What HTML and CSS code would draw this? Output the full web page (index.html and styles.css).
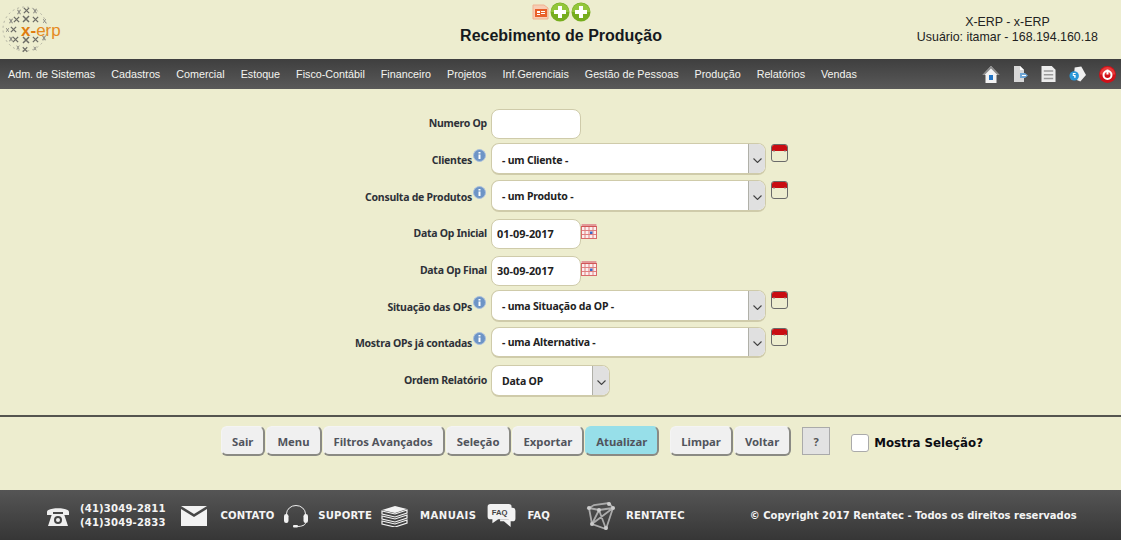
FILE: index.html
```html
<!DOCTYPE html>
<html lang="pt-BR">
<head>
<meta charset="utf-8">
<title>Recebimento de Produção</title>
<link rel="stylesheet" href="styles.css">
</head>
<body>
<svg class="defs" width="0" height="0" aria-hidden="true">
  <defs>
    <linearGradient id="calg" x1="0" y1="0" x2="0" y2="1"><stop offset="0" stop-color="#ffffff"/><stop offset="1" stop-color="#cfcfcf"/></linearGradient>
    <symbol id="x" viewBox="0 0 8 8"><path d="M1 1l6 6M7 1L1 7" stroke="#6c6c66" stroke-width="1.500" fill="none"/></symbol>
    <symbol id="xs" viewBox="0 0 8 8"><path d="M2 1l4 6M6 1L2 7" stroke="#86867f" stroke-width="1.400" fill="none"/></symbol>
    <symbol id="cal" viewBox="0 0 17 18">
      <rect x="0.500" y="0.500" width="16" height="17" rx="2.500" fill="url(#calg)" stroke="#6a6a6a"/>
      <path d="M1 3q0-2 2-2h11q2 0 2 2v4H1z" fill="#c90c12"/>
      <path d="M3 6v2M14 6v2" stroke="#888"/>
    </symbol>
    <symbol id="grid" viewBox="0 0 16 16">
      <rect x="0.500" y="3.500" width="15" height="12" fill="#fbeeee" stroke="#d86a6a"/>
      <path d="M0.500 1h15v3h-15z" fill="#d05555"/>
      <path d="M1 1v2M3 1v2M5 1v2M7 1v2M9 1v2M11 1v2M13 1v2M15 1v2" stroke="#fff" stroke-width=".8"/>
      <path d="M4 4v11M8 4v11M12 4v11M1 7.500h14M1 11.500h14" stroke="#e08080"/>
      <rect x="9" y="8.500" width="2.500" height="2.500" fill="#3a68c8"/>
    </symbol>
    <symbol id="info" viewBox="0 0 13 13">
      <circle cx="6.500" cy="6.500" r="6" fill="#6d94c6" stroke="#a9bfdc"/>
      <path d="M5.500 3h2v1.600h-2zM5.500 5.500h2v4.500h-2z" fill="#fff"/>
    </symbol>
    <symbol id="plus" viewBox="0 0 20 20">
      <circle cx="10" cy="10" r="9.500" fill="#76ad1e"/>
      <path d="M1 10a9 9 0 0 1 18 0z" fill="#93c63a"/>
      <path d="M8 4h4v4h4v4h-4v4H8v-4H4V8h4z" fill="#fff"/>
    </symbol>
    <symbol id="chev" viewBox="0 0 9 5"><path d="M.5 .5l4 4 4-4" fill="none" stroke="#444" stroke-width="1.100"/></symbol>
  </defs>
</svg>

<header class="top">
  <svg class="logo" width="62" height="54" viewBox="0 0 62 54" role="img" aria-label="x-erp">
    <circle cx="24" cy="28" r="22" fill="none" stroke="#a3a398" stroke-width=".8" stroke-dasharray="2 3"/>
    <use href="#xs" x="15" y="8" width="6" height="6"/><use href="#x" x="22" y="6" width="7" height="7"/><use href="#xs" x="31" y="7" width="6" height="6"/>
    <use href="#xs" x="7" y="17" width="6" height="6"/><use href="#x" x="12" y="15" width="7" height="7"/><use href="#x" x="21" y="14" width="8" height="8"/><use href="#x" x="31" y="15" width="7" height="7"/><use href="#xs" x="41" y="17" width="5" height="6"/>
    <use href="#xs" x="4" y="26" width="5" height="6"/><use href="#x" x="9" y="25" width="7" height="7"/>
    <use href="#xs" x="7" y="35" width="6" height="6"/><use href="#x" x="11" y="35" width="7" height="7"/><use href="#x" x="21" y="35" width="8" height="8"/><use href="#x" x="31" y="35" width="7" height="7"/><use href="#xs" x="40" y="34" width="6" height="6"/>
    <use href="#xs" x="14" y="44" width="6" height="5"/><use href="#x" x="21" y="45" width="6" height="7"/><use href="#xs" x="31" y="45" width="6" height="5"/>
    <text x="20" y="35" class="logo-text"><tspan class="logo-x">x-</tspan>erp</text>
  </svg>
  <div class="top-center">
    <div class="top-icons">
      <svg width="17" height="16" viewBox="0 0 17 16" aria-hidden="true">
        <path d="M1 1h11l4 3v11H1z" fill="#f8cdb4" stroke="#f0b391"/>
        <path d="M3 5h12v8H3z" fill="#e8602a"/>
        <path d="M5 7h3v2H5zM9 7h4v1H9zM9 9h4v1H9zM5 10h3v1H5z" fill="#fff"/>
      </svg>
      <svg width="20" height="20" aria-hidden="true"><use href="#plus"/></svg>
      <svg width="20" height="20" aria-hidden="true"><use href="#plus"/></svg>
    </div>
    <h1 class="title">Recebimento de Produção</h1>
  </div>
  <div class="user">
    <div>X-ERP - x-ERP</div>
    <div>Usuário: itamar - 168.194.160.18</div>
  </div>
</header>

<nav class="menu">
  <ul class="menu-list">
    <li>Adm. de Sistemas</li><li>Cadastros</li><li>Comercial</li><li>Estoque</li><li>Fisco-Contábil</li><li>Financeiro</li><li>Projetos</li><li>Inf.Gerenciais</li><li>Gestão de Pessoas</li><li>Produção</li><li>Relatórios</li><li>Vendas</li>
  </ul>
  <div class="menu-icons">
    <svg width="18" height="19" viewBox="0 0 18 19" aria-hidden="true">
      <path d="M9 1L0.500 10h3v8h11v-8h3z" fill="#f3f3f3"/>
      <path d="M9 1L0.500 10h2L9 3.500 15.500 10h2z" fill="#8b8b8b"/>
      <path d="M7 10h4v5H7z" fill="#2274c4"/>
    </svg>
    <svg width="15" height="18" viewBox="0 0 15 18" aria-hidden="true">
      <path d="M1 1h6l4 4v12H1z" fill="#d8d8d8"/>
      <path d="M7 1l4 4H7z" fill="#fff"/>
      <path d="M7 8h5l3 2.500-3 2.500H7z" fill="#6ea5d4"/>
      <path d="M9 10h4v1H9z" fill="#fff"/>
    </svg>
    <svg width="15" height="18" viewBox="0 0 16 18" aria-hidden="true">
      <path d="M0.500 0.500h11l4 4v13H.5z" fill="#ececec"/>
      <path d="M3 5h10v1.500H3zM3 9h10v1.500H3zM3 13h10v1.500H3z" fill="#9a9a9a"/>
    </svg>
    <svg width="17" height="18" viewBox="0 0 18 18" aria-hidden="true">
      <path d="M6 2l7-1 5 9-6 7-7-3z" fill="#f0f0f0"/>
      <circle cx="5.500" cy="11" r="5" fill="#2a96d8"/>
      <path d="M4 8h3v1H5v1h2v3H5.500v-2H4z" fill="#fff"/>
    </svg>
    <svg width="17" height="17" viewBox="0 0 17 17" aria-hidden="true">
      <circle cx="8.500" cy="8.500" r="8.500" fill="#d01018"/>
      <path d="M1 8.500a7.500 7.500 0 0 1 15 0z" fill="#e83a3a"/>
      <circle cx="8.500" cy="9" r="4" fill="none" stroke="#fff" stroke-width="2"/>
      <path d="M8.500 3.500v5" stroke="#fff" stroke-width="2"/>
    </svg>
  </div>
</nav>

<main class="content">
  <form class="form">
    <div class="row row-num">
      <label class="lbl" for="f-num">Numero Op</label>
      <input class="field" id="f-num" type="text">
    </div>
    <div class="row row-a">
      <label class="lbl lbl-i">Clientes<svg class="info" width="13" height="13" aria-hidden="true"><use href="#info"/></svg></label>
      <div class="sel sel-wide"><span class="sel-text">- um Cliente -</span><span class="arrow"><svg width="9" height="5" aria-hidden="true"><use href="#chev"/></svg></span></div>
      <svg class="cal" width="17" height="18" aria-hidden="true"><use href="#cal"/></svg>
    </div>
    <div class="row row-b">
      <label class="lbl lbl-i">Consulta de Produtos<svg class="info" width="13" height="13" aria-hidden="true"><use href="#info"/></svg></label>
      <div class="sel sel-wide"><span class="sel-text">- um Produto -</span><span class="arrow"><svg width="9" height="5" aria-hidden="true"><use href="#chev"/></svg></span></div>
      <svg class="cal" width="17" height="18" aria-hidden="true"><use href="#cal"/></svg>
    </div>
    <div class="row row-c">
      <label class="lbl" for="f-ini">Data Op Inicial</label>
      <input class="field" id="f-ini" type="text" value="01-09-2017">
      <svg class="grid-ic" width="16" height="16" aria-hidden="true"><use href="#grid"/></svg>
    </div>
    <div class="row row-d">
      <label class="lbl" for="f-fim">Data Op Final</label>
      <input class="field" id="f-fim" type="text" value="30-09-2017">
      <svg class="grid-ic" width="16" height="16" aria-hidden="true"><use href="#grid"/></svg>
    </div>
    <div class="row row-e">
      <label class="lbl lbl-i">Situação das OPs<svg class="info" width="13" height="13" aria-hidden="true"><use href="#info"/></svg></label>
      <div class="sel sel-wide"><span class="sel-text">- uma Situação da OP -</span><span class="arrow"><svg width="9" height="5" aria-hidden="true"><use href="#chev"/></svg></span></div>
      <svg class="cal" width="17" height="18" aria-hidden="true"><use href="#cal"/></svg>
    </div>
    <div class="row row-f">
      <label class="lbl lbl-i">Mostra OPs já contadas<svg class="info" width="13" height="13" aria-hidden="true"><use href="#info"/></svg></label>
      <div class="sel sel-wide"><span class="sel-text">- uma Alternativa -</span><span class="arrow"><svg width="9" height="5" aria-hidden="true"><use href="#chev"/></svg></span></div>
      <svg class="cal" width="17" height="18" aria-hidden="true"><use href="#cal"/></svg>
    </div>
    <div class="row row-g">
      <label class="lbl">Ordem Relatório</label>
      <div class="sel sel-small"><span class="sel-text">Data OP</span><span class="arrow"><svg width="9" height="5" aria-hidden="true"><use href="#chev"/></svg></span></div>
    </div>
  </form>

  <div class="actions">
    <div class="btn-group">
      <button class="btn" type="button">Sair</button>
      <button class="btn" type="button">Menu</button>
      <button class="btn" type="button">Filtros Avançados</button>
      <button class="btn" type="button">Seleção</button>
      <button class="btn" type="button">Exportar</button>
      <button class="btn btn-primary" type="button">Atualizar</button>
    </div>
    <div class="btn-group btn-group-2">
      <button class="btn" type="button">Limpar</button>
      <button class="btn" type="button">Voltar</button>
    </div>
    <button class="help" type="button">?</button>
    <label class="check"><span class="box"></span>Mostra Seleção?</label>
  </div>
</main>

<footer class="foot">
  <svg class="f-phone" width="24" height="24" viewBox="0 0 24 24" aria-hidden="true">
    <path d="M1 8c0-5 22-5 22 0v3h-6V8H7v3H1z" fill="#eee"/>
    <path d="M6 10h12l4 12H2z" fill="#eee"/>
    <circle cx="12" cy="16" r="4" fill="#444"/><circle cx="12" cy="16" r="2" fill="#eee"/>
  </svg>
  <div class="f-tel"><div>(41)3049-2811</div><div>(41)3049-2833</div></div>
  <svg class="f-mail" width="26" height="20" viewBox="0 0 26 20" aria-hidden="true">
    <path d="M0 0h26L13 8z" fill="#f2f2f2"/>
    <path d="M0 3l13 8 13-8v17H0z" fill="#f2f2f2"/>
  </svg>
  <span class="f-link f-contato">CONTATO</span>
  <svg class="f-head" width="26" height="23" viewBox="0 0 26 23" aria-hidden="true">
    <path d="M3.500 11V9a9.500 8.500 0 0 1 19 0v2" fill="none" stroke="#eee"/>
    <rect x="1" y="9" width="4.500" height="9" rx="2.200" fill="#f2f2f2"/>
    <rect x="20.500" y="9" width="4.500" height="9" rx="2.200" fill="#f2f2f2"/>
    <path d="M22.500 18c0 2-4 3.500-8 3.500" fill="none" stroke="#eee"/>
    <rect x="10" y="20" width="5" height="2.500" rx="1" fill="#f2f2f2"/>
  </svg>
  <span class="f-link f-suporte">SUPORTE</span>
  <svg class="f-books" width="27" height="22" viewBox="0 0 27 22" aria-hidden="true">
    <path d="M1 5l13-4 12 3-12 4z" fill="#f2f2f2"/>
    <path d="M1 6l13 3 12-4v3l-12 4-13-3zM1 11l13 3 12-4v3l-12 4-13-3zM1 16l13 3 12-4v3l-12 4-13-3z" fill="none" stroke="#f2f2f2" stroke-width="1.200"/>
  </svg>
  <span class="f-link f-manuais">MANUAIS</span>
  <svg class="f-faq" width="30" height="24" viewBox="0 0 30 25" aria-hidden="true">
    <path d="M22 4h4q3 0 3 3v8q0 3-3 3h-2v6l-7-6h-4v-2h9z" fill="#f2f2f2"/>
    <path d="M3 0h19q3 0 3 3v10q0 3-3 3H11l-6 4v-4H3q-3 0-3-3V3q0-3 3-3z" fill="#f2f2f2"/>
    <text x="12.500" y="11" class="faq-text">FAQ</text>
  </svg>
  <span class="f-link f-faqt">FAQ</span>
  <svg class="f-cube" width="30" height="28" viewBox="0 0 30 28" aria-hidden="true">
    <path d="M3 6l10 2 14-2-4-5L8 3zM3 6l3 16 14 5 7-21M13 8l7 19M6 22l7-14M13 8l14-2M6 22l21-16" fill="none" stroke="#aaa" stroke-width="1.800"/>
    <circle cx="3" cy="6" r="2" fill="#ccc"/><circle cx="13" cy="8" r="2" fill="#ccc"/><circle cx="27" cy="6" r="2" fill="#ccc"/><circle cx="23" cy="2" r="2" fill="#ccc"/><circle cx="6" cy="22" r="2" fill="#ccc"/><circle cx="20" cy="26" r="2" fill="#ccc"/>
  </svg>
  <span class="f-link f-rent">RENTATEC</span>
  <span class="f-link f-copy">© Copyright 2017 Rentatec - Todos os direitos reservados</span>
</footer>
</body>
</html>
```
FILE: styles.css
```css
* { box-sizing: border-box; }
html, body { margin: 0; padding: 0; }
body {
  width: 1121px;
  height: 540px;
  overflow: hidden;
  background: #ededcf;
  font-family: "Noto Sans", sans-serif;
  color: #222;
  display: flex;
  flex-direction: column;
}
.defs { display: none; }

/* header */
.top {
  height: 59px;
  flex: none;
  display: flex;
  position: relative;
  padding: 0 23px 0 1px;
  justify-content: space-between;
}
.logo { margin-top: 1px; }
.logo-text { font: 17px "Liberation Sans", sans-serif; fill: #e58a1e; }
.logo-x { font-weight: bold; fill: #df7c10; }
.top-center {
  display: flex;
  flex-direction: column;
  align-items: center;
  position: absolute;
  left: 461px;
  width: 200px;
  top: 2px;
}
.top-icons { display: flex; align-items: center; gap: 1px; height: 20px; }
.title {
  margin: 4px 0 0;
  font: bold 16px/20px "Liberation Sans", sans-serif;
  white-space: nowrap;
  color: #15191d;
}
.user {
  margin-top: 15px;
  text-align: center;
  font: 12.400px/15px "Liberation Sans", sans-serif;
  color: #222;
}

/* menu */
.menu {
  height: 30px;
  flex: none;
  background: linear-gradient(#3f3f3f, #595959);
  display: flex;
  justify-content: space-between;
  align-items: center;
  padding: 0 5px 0 8px;
}
.menu-list {
  margin: 0;
  padding: 0;
  list-style: none;
  display: flex;
  gap: 16px;
  font: 10.750px/14px "Liberation Sans", sans-serif;
  color: #f4f4f0;
}
.menu-icons { display: flex; align-items: center; gap: 13px; }

/* form */
.content { flex: 1; }
.form { padding-top: 20px; height: 328px; border-bottom: 2px solid #55554f; }
.row { display: flex; align-items: flex-start; }
.row-a { margin-top: 4px; }
.row-b { margin-top: 5px; }
.row-c { margin-top: 7px; }
.row-d { margin-top: 7px; }
.row-e { margin-top: 4px; }
.row-f { margin-top: 5px; }
.row-g { margin-top: 7px; }
.lbl {
  width: 491px;
  padding-right: 4px;
  display: flex;
  justify-content: flex-end;
  align-items: center;
  min-height: 30px;
  font: bold 10.500px/14px "Noto Sans", sans-serif;
  letter-spacing: -.25px;
  color: #2e3138;
  white-space: nowrap;
}
.row-num .lbl, .row-c .lbl, .row-d .lbl { padding-bottom: 2px; }
.lbl-i { height: 32px; padding: 2px 5px 0 0; }
.row-f .lbl-i { height: 31px; padding-top: 1px; }
.info { margin: -9px 0 0 1px; }
.field {
  height: 30px;
  width: 90px;
  border: 1px solid #cfcbaa;
  border-radius: 8px;
  background: #fff;
  padding: 0 5px 2px;
  font: bold 10.900px "Noto Sans", sans-serif;
  color: #222;
  outline: none;
}
.sel {
  display: flex;
  height: 32px;
  border: 1px solid #cfcbaa;
  border-bottom-width: 2px;
  border-radius: 8px;
  background: #fff;
  overflow: hidden;
  font: bold 10.500px/30px "Noto Sans", sans-serif;
  letter-spacing: -.2px;
  color: #222;
}
.row-a .sel { line-height: 32px; }
.row-f .sel { height: 31px; line-height: 29px; }
.sel-wide { width: 275px; }
.sel-small { width: 119px; }
.sel-text { flex: 1; padding-left: 10px; }
.arrow {
  width: 17px;
  background: #e0e0e0;
  border-left: 1px solid #b0b0a8;
  display: flex;
  align-items: center;
  justify-content: center;
  padding-top: 3px;
}
.cal { margin: 1px 0 0 5px; }
.grid-ic { margin: 4px 0 0 0; }

/* actions */
.actions {
  display: flex;
  align-items: flex-start;
  padding: 9px 0 0 221px;
}
.btn-group { display: flex; gap: 1px; }
.btn-group-2 { margin-left: 11px; }
.btn {
  height: 30px;
  padding: 1px 10px 0;
  border: 1px solid #f4f4f4;
  border-right: 2px solid #8a8a84;
  border-bottom: 2px solid #8a8a84;
  border-radius: 6px;
  background: #f0f0f0;
  font: bold 11.300px "Noto Sans", sans-serif;
  color: #51545c;
}
.btn-primary { background: #97dfe9; border-color: #97dfe9 #8a8a84 #8a8a84 #97dfe9; }
.help {
  width: 28px;
  height: 28px;
  margin: 1px 0 0 11px;
  background: #e2e2e2;
  border: 1px solid #aaa;
  font: bold 11px "Noto Sans", sans-serif;
  color: #555;
  padding: 0;
}
.check {
  display: flex;
  align-items: center;
  margin: 8px 0 0 21px;
  font: bold 11.800px/18px "DejaVu Sans", sans-serif;
  color: #0b0b12;
  gap: 5px;
}
.box {
  width: 18px;
  height: 18px;
  background: #fff;
  border: 1px solid #aaa;
  border-radius: 3px;
}

/* footer */
.foot {
  height: 50px;
  flex: none;
  background: linear-gradient(#555, #363636);
  display: flex;
  align-items: center;
  color: #f4f4f4;
  padding: 2px 0 0 46px;
}
.f-link, .f-tel { font: bold 10.100px/14.500px "DejaVu Sans", sans-serif; color: #f4f4f4; white-space: nowrap; letter-spacing: .15px; }
.f-tel { margin-left: 10px; }
.f-mail { margin-left: 15px; }
.f-contato { margin-left: 14px; letter-spacing: .1px; }
.f-head { margin-left: 9px; }
.f-suporte { margin-left: 9px; }
.f-books { margin-left: 9px; }
.f-manuais { margin-left: 12px; letter-spacing: .5px; }
.f-faq { margin-left: 11px; }
.f-faqt { margin-left: 10px; }
.f-cube { margin-left: 36px; }
.f-rent { margin-left: 10px; }
.f-copy { margin-left: 65px; font-size: 10px; letter-spacing: 0; }
.faq-text { font: bold 8px "Liberation Sans", sans-serif; fill: #444; text-anchor: middle; letter-spacing: 0; }
```
